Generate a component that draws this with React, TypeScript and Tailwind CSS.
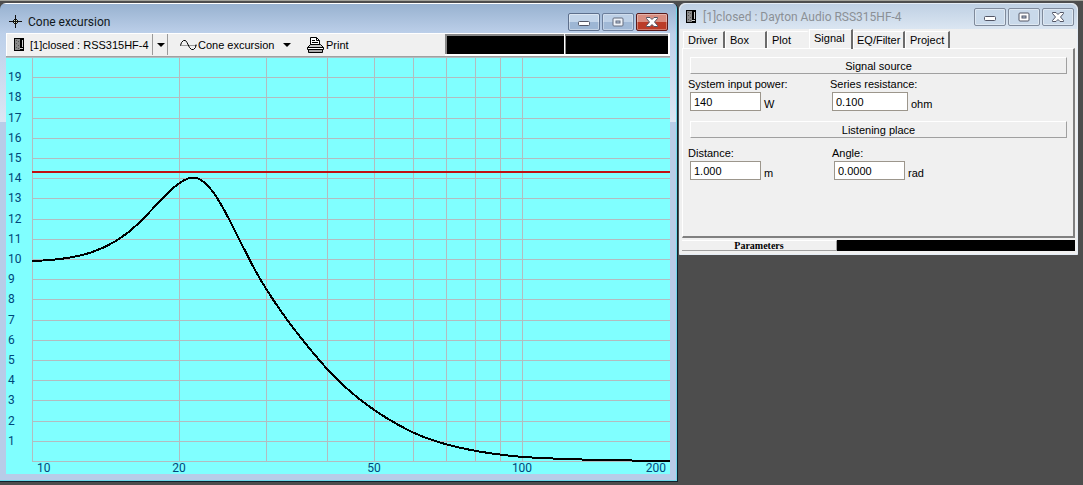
import { useState, type ReactNode } from 'react'
import clsx from 'clsx'

const TABS = ['Driver', 'Box', 'Plot', 'Signal', 'EQ/Filter', 'Project']

const TAB_CLASSES: Record<string, string> = {
  Driver: 'w-[42px] pl-1',
  Box: 'w-[42px] pl-1',
  Plot: 'w-[42px] pl-1',
  Signal: 'w-[44px] pl-1',
  'EQ/Filter': 'w-[52px] pl-[3px]',
  Project: 'w-[45px] pl-1',
}

const FREQUENCIES = [10, 20, 30, 40, 50, 60, 70, 80, 90, 100]
const LEVELS = Array.from({ length: 20 }, (_, i) => i)

// Cone excursion over frequency, in plot coordinates
const CURVE =
  'M26 204C70 203 104 195 134 165C153 146 172 121 187 120.5' +
  'C206 121 222 161 244 203.5C259 233 284 269 314 304' +
  'C342 337 372 358.5 407 375.5C442 391.5 482 397 517 400' +
  'C562 403 612 403.5 664 404'

const freqX = (f: number) => Math.floor(26 + 490.7 * Math.log10(f / 10))
const levelY = (n: number) => Math.round(404 - 20.2 * n)

function BoxIcon() {
  return (
    <svg width="10" height="13" viewBox="0 0 10 13" shapeRendering="crispEdges" aria-hidden="true">
      <rect width="10" height="13" fill="#000" />
      <rect x="1" y="1" width="5" height="11" fill="#8a8a8a" />
      <path d="M2 2h1v1h-1zM4 3h1v1h-1zM2 5h1v1h-1zM4 7h1v1h-1zM2 9h1v1h-1zM4 10h1v1h-1z" fill="#555" />
      <path d="M8 2h1v7h-1zM6 10h3v1h-3z" fill="#d0d0d0" />
    </svg>
  )
}

function CrosshairIcon() {
  return (
    <svg width="13" height="13" viewBox="0 0 13 13" shapeRendering="crispEdges" aria-hidden="true">
      <path d="M6 0h1v13h-1zM0 6h13v1h-13z" fill="#111" />
      <path d="M5 4h3v1h1v3h-1v1h-3v-1h-1v-3h1z" fill="#111" />
      <path d="M5 5h1v1h-1zM7 5h1v1h-1zM5 7h1v1h-1zM7 7h1v1h-1z" fill="#d8dfb8" />
    </svg>
  )
}

function WaveIcon() {
  return (
    <svg width="17" height="12" viewBox="0 0 17 12" fill="none" stroke="#000" aria-hidden="true">
      <path d="M0 6.5h17" stroke="#999" />
      <path d="M.5 6.5L1.5 3.5L3.5 1.5H5.5L7 3.5L9.5 8.5L11.5 10.5H13.5L15.5 8.5L16 5.5" />
    </svg>
  )
}

function PrinterIcon() {
  return (
    <svg width="17" height="16" viewBox="0 0 17 16" fill="none" stroke="#000" aria-hidden="true">
      <path d="M3.5 8.5V.5H9.5L12.5 3.5V8.5Z" fill="#fff" />
      <path d="M9.5 .5V3.5H12.5M5 3.5H8M5 5.5H11" />
      <path d="M.5 10.5L3.5 7.5H13.5L16.5 10.5Z" fill="#c8c8c8" />
      <path d="M.5 10.5H16.5V12.5H.5Z" fill="#fff" />
      <path d="M1.5 12.5H15.5V15.5H1.5Z" fill="#aaa" />
    </svg>
  )
}

function Arrow({ className }: { className?: string }) {
  return (
    <svg className={className} width="8" height="4" viewBox="0 0 8 4" aria-hidden="true">
      <path d="M0 0H8L4 4Z" fill="#000" />
    </svg>
  )
}

function WindowButtons({ active }: { active: boolean }) {
  const base = clsx(
    'flex h-[18px] w-8 items-center justify-center rounded-[2px] border shadow-[inset_0_0_0_1px_#ffffff66]',
    active
      ? 'border-[#5d6f8c] bg-linear-to-b from-[#c3d5ea] from-50% to-[#9db6d4] to-50%'
      : 'border-[#7f8a9b] bg-[#c9d9ea]',
  )
  return (
    <div className="flex gap-0.5">
      <button type="button" aria-label="Minimize" className={base}>
        <svg className="mt-1" width="12" height="6" viewBox="0 0 12 6">
          <rect x=".5" y=".5" width="11" height="4" rx="1" fill="#fff" stroke="#535666" />
        </svg>
      </button>
      <button type="button" aria-label="Maximize" className={clsx(base, active && 'opacity-80')}>
        <svg width="12" height="10" viewBox="0 0 12 10">
          <rect x="1" y="1" width="10" height="8" rx="1" fill="#fff" stroke="#535666" />
          <rect x="4" y="4" width="4" height="2" fill="#b7c9df" stroke="#535666" />
        </svg>
      </button>
      <button
        type="button"
        aria-label="Close"
        className={
          active
            ? 'flex h-[18px] w-8 items-center justify-center rounded-[2px] border border-[#5a1a1a] bg-linear-to-b from-[#d98d80] from-50% to-[#bb3c28] to-50% shadow-[inset_0_0_0_1px_#ffffff55]'
            : base
        }
      >
        <svg width="12" height="10" viewBox="0 0 12 10">
          <path
            d="M.5 .5H4L6 2.5L8 .5H11.5V1.5L8.5 5L11.5 8.5V9.5H8L6 7.5L4 9.5H.5V8.5L3.5 5L.5 1.5Z"
            fill="#fff"
            stroke="#535666"
          />
        </svg>
      </button>
    </div>
  )
}

function Separator() {
  return <span className="h-[18px] w-px bg-[#9a9a9a]" />
}

function ExcursionPlot() {
  return (
    <svg viewBox="0 0 664 417" className="block h-auto w-full bg-[#80ffff]" role="img" aria-label="Cone excursion">
      <g stroke="#b2bcc0" shapeRendering="crispEdges">
        <path d="M0 .5H664" />
        {LEVELS.map((n) => (
          <path key={n} d={`M26 ${levelY(n) + 0.5}H664`} />
        ))}
        {FREQUENCIES.map((f) => (
          <path key={f} d={`M${freqX(f) + 0.5} 0V404`} />
        ))}
      </g>
      <g fill="#00477a" fontFamily="Roboto, sans-serif" fontSize="12">
        {LEVELS.slice(1).map((n) => (
          <text key={n} x="2" y={levelY(n) + 4}>
            {n}
          </text>
        ))}
        <text x="31" y="415">10</text>
        <text x="173" y="415" textAnchor="middle">20</text>
        <text x="368" y="415" textAnchor="middle">50</text>
        <text x="516" y="415" textAnchor="middle">100</text>
        <text x="660" y="415" textAnchor="end">200</text>
      </g>
      <path d="M26 115H664" stroke="#c01010" strokeWidth="2" />
      <path d={CURVE} fill="none" stroke="#000" strokeWidth="2" shapeRendering="crispEdges" />
    </svg>
  )
}

function PlotWindow() {
  return (
    <section className="overflow-hidden rounded-t-md border-r border-b border-[#10202c]">
      <div className="border-t border-r border-b border-t-white border-r-[#6fd8ea] border-b-[#6fd8ea] bg-[linear-gradient(#98b2d0,#bdd0ea_30px,#dde6f4_118px,#b8cce8_118px)] pr-1.5 pb-[6px] pl-[6px]">
        <header className="flex h-[29px] items-center justify-between pt-1.5 pr-0.5">
          <h1 className="flex items-center gap-1.5 pl-[3px] font-['Roboto',sans-serif] text-xs text-[#101820]">
            <CrosshairIcon />
            Cone excursion
          </h1>
          <WindowButtons active />
        </header>
        <div className="flex h-6 items-center border-b border-[#a0a0a0] bg-[#f0f0f0] pl-2 shadow-[inset_1px_1px_0_#fff]">
          <BoxIcon />
          <div className="relative ml-1 flex items-center">
            <select
              aria-label="Project"
              className="h-[21px] w-[140px] appearance-none border-r border-[#9a9a9a] bg-transparent pl-0.5 outline-none"
            >
              <option>[1]closed : RSS315HF-4</option>
            </select>
            <span className="pointer-events-none absolute right-0 flex h-[21px] w-4 items-center justify-center border-l border-[#9a9a9a]">
              <Arrow />
            </span>
          </div>
          <div className="ml-1">
            <Separator />
          </div>
          <div className="ml-2 flex items-center">
            <WaveIcon />
            <div className="relative flex items-center">
              <select
                aria-label="Plot type"
                className="h-[21px] w-[96px] appearance-none bg-transparent pl-px outline-none"
              >
                <option>Cone excursion</option>
              </select>
              <Arrow className="pointer-events-none absolute right-0.5" />
            </div>
          </div>
          <div className="ml-1.5">
            <Separator />
          </div>
          <button type="button" className="ml-2 flex items-center gap-0.5">
            <PrinterIcon />
            Print
          </button>
          <div className="ml-auto flex h-full w-[225px] gap-px bg-white pt-px pr-0.5 pb-0.5">
            <span className="w-[119px] border-t-2 border-l-2 border-[#888] bg-black" />
            <span className="flex-1 border-t-2 border-l border-[#888] bg-black" />
          </div>
        </div>
        <ExcursionPlot />
      </div>
    </section>
  )
}

function SectionTitle({ children }: { children: ReactNode }) {
  return (
    <h2 className="mx-0.5 flex h-[17px] items-center justify-center border border-t-white border-r-[#a0a0a0] border-b-[#a0a0a0] border-l-white">
      {children}
    </h2>
  )
}

interface FieldProps {
  id: string
  label: string
  value: string
  unit: string
  wide?: boolean
}

function Field({ id, label, value, unit, wide }: FieldProps) {
  return (
    <div>
      <label htmlFor={id} className="block h-[15px] leading-[14px]">
        {label}
      </label>
      <div className="flex items-end gap-[3px] pl-0.5">
        <input
          id={id}
          defaultValue={value}
          className={clsx(
            'h-[19px] border border-[#9c968c] bg-white px-[3px] outline-none',
            wide ? 'w-[76px]' : 'w-[71px]',
          )}
        />
        <span className="leading-[14px]">{unit}</span>
      </div>
    </div>
  )
}

function SignalPanel() {
  return (
    <div className="pt-2 pr-1 pl-[5px]">
      <SectionTitle>Signal source</SectionTitle>
      <div className="grid h-[47px] grid-cols-[142px_1fr] pt-[3px]">
        <Field id="power" label="System input power:" value="140" unit="W" />
        <Field id="resistance" label="Series resistance:" value="0.100" unit="ohm" wide />
      </div>
      <SectionTitle>Listening place</SectionTitle>
      <div className="grid grid-cols-[144px_1fr] pt-2">
        <Field id="distance" label="Distance:" value="1.000" unit="m" />
        <Field id="angle" label="Angle:" value="0.0000" unit="rad" />
      </div>
    </div>
  )
}

function ProjectWindow() {
  const [tab, setTab] = useState('Signal')
  const activeIndex = TABS.indexOf(tab)

  return (
    <section className="rounded-t-md border border-[#e4ecf5] bg-[#f0f0f0] px-0.5 pb-[3px]">
      <header className="-mx-0.5 flex h-[25px] items-center justify-between rounded-t-md bg-linear-to-b from-[#bfd0e3] to-[#dbe6f2] pr-[3px] pl-[6px]">
        <h1 className="flex items-center gap-[7px] font-['Roboto',sans-serif] text-xs text-[#8b9096]">
          <BoxIcon />
          [1]closed : Dayton Audio RSS315HF-4
        </h1>
        <WindowButtons active={false} />
      </header>
      <div role="tablist" className="flex h-[19px] items-end pl-px">
        {TABS.map((name, i) => (
          <button
            key={name}
            type="button"
            role="tab"
            aria-selected={tab === name}
            onClick={() => setTab(name)}
            className={clsx(
              'border-t border-r-2 border-l border-t-white border-l-white text-left',
              TAB_CLASSES[name],
              i === activeIndex - 1 ? 'border-r-transparent' : 'border-r-[#6b6b6b]',
              tab === name ? 'h-5 self-start pb-1' : 'h-[17px]',
            )}
          >
            {name}
          </button>
        ))}
      </div>
      <div
        role="tabpanel"
        className="h-[190px] border border-r-2 border-b-2 border-t-white border-r-[#808080] border-b-[#808080] border-l-white"
      >
        {tab === 'Signal' && <SignalPanel />}
      </div>
      <footer className="mt-0.5 flex h-[11px] bg-black">
        <div className="flex w-[155px] items-center justify-center border-t border-r border-b border-t-white border-r-[#a0a0a0] border-b-[#a0a0a0] bg-[#f0f0f0] font-['Liberation_Serif',serif] text-[10px] leading-[10px] font-bold">
          Parameters
        </div>
      </footer>
    </section>
  )
}

export default function App() {
  return (
    <main className="grid min-h-screen grid-cols-[678fr_399fr] items-start gap-px border-t border-[#a3a39b] bg-[#4d4d4d] pt-0.5 pr-[5px] font-['Liberation_Sans',sans-serif] text-[11px] leading-[14px] text-black">
      <PlotWindow />
      <ProjectWindow />
    </main>
  )
}
